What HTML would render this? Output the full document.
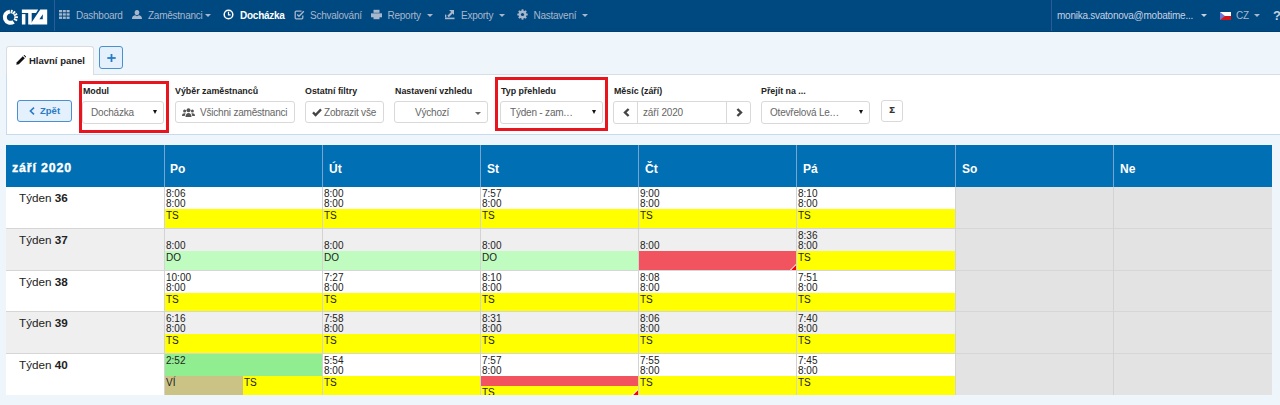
<!DOCTYPE html>
<html><head><meta charset="utf-8">
<style>
*{box-sizing:border-box;margin:0;padding:0}
html,body{width:1280px;height:405px;overflow:hidden}
body{background:#eef5fb;font-family:"Liberation Sans",sans-serif;position:relative;color:#222}
.a{position:absolute}
#nav{left:0;top:0;width:1280px;height:32px;background:#004880;border-bottom:1px solid #003f73}
.ni{position:absolute;top:0;height:31px;line-height:32px;font-size:10px;letter-spacing:-0.25px;color:#a9b7cc;white-space:nowrap}
.sep{position:absolute;top:0;width:1px;height:31px;background:#2a5c9c}
.caret{position:absolute;top:14px;width:0;height:0;border-left:3px solid transparent;border-right:3px solid transparent;border-top:3px solid #a9b7cc}
/* panel */
#tab{left:6px;top:46px;width:88px;height:29px;background:#fff;border:1px solid #d9dde2;border-bottom:none;border-radius:3px 3px 0 0}
#panel{left:6px;top:74px;width:1274px;height:61px;background:#fff;border:1px solid #c6daf0;border-top-color:#d6dee8;border-right:none}
.lbl{position:absolute;top:86px;font-size:8.85px;font-weight:bold;color:#222;white-space:nowrap}
.box{position:absolute;top:101px;height:22px;border:1px solid #d9d9d9;border-radius:3px;background:#fff;font-size:10px;letter-spacing:-0.2px;color:#666;line-height:21px;white-space:nowrap}
.arr{position:absolute;top:8px;width:0;height:0;border-left:2.5px solid transparent;border-right:2.5px solid transparent;border-top:4px solid #111}
.red{position:absolute;border:3px solid #e8141e}
/* table */
.hd{position:absolute;top:145px;height:42px;background:#006fb3;color:#fff;font-weight:bold;font-size:12px}
.hd span{position:absolute;top:17px;left:6px}
.vb{position:absolute;width:1px;background:#74a6cf}
.row{position:absolute;left:6px;width:1266px}
.cell{position:absolute;top:0;bottom:1px;font-size:10px;line-height:10px;color:#222;overflow:hidden}
.t{position:absolute;left:1px}
.bar{position:absolute;left:0;right:0}
.bar span{position:absolute;left:1px;top:2px}
.y{background:#ffff00}
.g{background:#c0fcc0}
.rd{background:#f2545f}
</style></head><body>

<!-- NAV -->
<div id="nav" class="a"></div>
<svg class="a" style="left:0;top:0" width="54" height="32" viewBox="0 0 54 32">
  <path d="M9.91 11.62 A5.6 5.6 0 1 0 13.61 21.79" fill="none" stroke="#fff" stroke-width="4"/>
  <g stroke="#fff" stroke-width="1.9">
    <line x1="11.21" y1="13.39" x2="11.96" y2="9.86"/>
    <line x1="12.8" y1="14.13" x2="15.02" y2="11.29"/>
    <line x1="13.91" y1="15.49" x2="17.14" y2="13.91"/>
    <line x1="14.3" y1="17.2" x2="17.9" y2="17.2"/>
    <line x1="13.91" y1="18.91" x2="17.14" y2="20.49"/>
  </g>
  <path d="M21.9 9.5 H38.2 L36 13.1 H21.9 Z" fill="#fff"/>
  <rect x="21.9" y="14.1" width="3.5" height="10.4" fill="#fff"/>
  <rect x="28.2" y="12.9" width="3.5" height="11.6" fill="#fff"/>
  <path d="M40.3 9.5 H47.2 V24.5 H30.2 Z M39.4 19.2 L42.8 14.2 V19.2 Z" fill="#fff" fill-rule="evenodd"/>
</svg>
<div class="sep" style="left:54px"></div>
<div class="sep" style="left:1051px"></div>

<!-- grid icon -->
<svg class="a" style="left:59px;top:10px" width="11" height="9" viewBox="0 0 11 9" fill="#a9b7cc">
  <rect x="0" y="0" width="3" height="2.3"/><rect x="3.8" y="0" width="3" height="2.3"/><rect x="7.6" y="0" width="3" height="2.3"/>
  <rect x="0" y="3.3" width="3" height="2.3"/><rect x="3.8" y="3.3" width="3" height="2.3"/><rect x="7.6" y="3.3" width="3" height="2.3"/>
  <rect x="0" y="6.6" width="3" height="2.3"/><rect x="3.8" y="6.6" width="3" height="2.3"/><rect x="7.6" y="6.6" width="3" height="2.3"/>
</svg>
<div class="ni" style="left:76px">Dashboard</div>
<!-- person -->
<svg class="a" style="left:132px;top:10px" width="10" height="9" viewBox="0 0 10 9" fill="#a9b7cc">
  <ellipse cx="5" cy="2.6" rx="2.3" ry="2.6"/><path d="M0 9 C0 6 2 5.4 3.2 5.2 L5 6.2 L6.8 5.2 C8 5.4 10 6 10 9 Z"/>
</svg>
<div class="ni" style="left:148px">Zaměstnanci</div>
<div class="caret" style="left:205px"></div>
<!-- clock -->
<svg class="a" style="left:223px;top:9px" width="11" height="11" viewBox="0 0 11 11">
  <circle cx="5.5" cy="5.5" r="4.3" fill="none" stroke="#fff" stroke-width="1.5"/>
  <path d="M5.5 2.8 V5.8 H7.6" fill="none" stroke="#fff" stroke-width="1.2"/>
</svg>
<div class="ni" style="left:240px;color:#fff;font-weight:bold">Docházka</div>
<!-- checkbox -->
<svg class="a" style="left:294px;top:9px" width="11" height="11" viewBox="0 0 11 11">
  <path d="M7.5 2.2 H2.2 A1 1 0 0 0 1.2 3.2 V8.8 A1 1 0 0 0 2.2 9.8 H7.8 A1 1 0 0 0 8.8 8.8 V6.5" fill="none" stroke="#a9b7cc" stroke-width="1.3"/>
  <path d="M3.2 5.4 L5 7.2 L9.8 2.2" fill="none" stroke="#a9b7cc" stroke-width="1.4"/>
</svg>
<div class="ni" style="left:310px">Schvalování</div>
<!-- printer -->
<svg class="a" style="left:371px;top:9px" width="11" height="11" viewBox="0 0 11 11" fill="#a9b7cc">
  <rect x="2.5" y="0.8" width="6" height="3"/><rect x="0" y="4.3" width="11" height="4"/><rect x="2.5" y="7.5" width="6" height="2.7"/>
</svg>
<div class="ni" style="left:387.5px">Reporty</div>
<div class="caret" style="left:426.5px"></div>
<!-- export -->
<svg class="a" style="left:445px;top:9px" width="10" height="11" viewBox="0 0 10 11" fill="#a9b7cc">
  <rect x="0" y="8.6" width="9.5" height="1.6"/><path d="M4 1 H9 V6 L7.6 4.6 L3.8 8.3 L2.3 6.8 L6.1 3.1 L4.6 1.6 Z"/><rect x="0" y="5.6" width="1.3" height="3"/>
</svg>
<div class="ni" style="left:461px">Exporty</div>
<div class="caret" style="left:499px"></div>
<!-- gear -->
<svg class="a" style="left:517px;top:9px" width="11" height="11" viewBox="0 0 11 11">
  <circle cx="5.5" cy="5.5" r="3" fill="none" stroke="#a9b7cc" stroke-width="2"/>
  <g stroke="#a9b7cc" stroke-width="1.8"><line x1="5.5" y1="0.3" x2="5.5" y2="10.7"/><line x1="0.3" y1="5.5" x2="10.7" y2="5.5"/><line x1="1.8" y1="1.8" x2="9.2" y2="9.2"/><line x1="9.2" y1="1.8" x2="1.8" y2="9.2"/></g>
  <circle cx="5.5" cy="5.5" r="1.6" fill="#004880"/>
</svg>
<div class="ni" style="left:533.5px">Nastavení</div>
<div class="caret" style="left:582px"></div>

<div class="ni" style="left:1057px;color:#c5d1e2">monika.svatonova@mobatime...</div>
<div class="caret" style="left:1201px;border-top-color:#c5d1e2"></div>
<svg class="a" style="left:1220px;top:12px" width="11" height="8" viewBox="0 0 11 8">
  <rect width="11" height="4" fill="#fff"/><rect y="4" width="11" height="4" fill="#d7141a"/><path d="M0 0 L5 4 L0 8Z" fill="#6a78d8"/>
</svg>
<div class="ni" style="left:1236px">CZ</div>
<div class="caret" style="left:1254px"></div>
<div class="ni" style="left:1273px;color:#c5d1e2;font-weight:bold;font-size:13px">?</div>

<!-- TAB + PANEL -->
<div id="panel" class="a"></div>
<div id="tab" class="a"></div>
<svg class="a" style="left:16px;top:55px" width="10" height="10" viewBox="0 0 10 10">
  <path d="M0.3 9.7 L0.8 7.2 L6.8 1.2 L8.8 3.2 L2.8 9.2 Z" fill="#111"/><path d="M7.6 0.4 L8.2 -0.2 L10.2 1.8 L9.6 2.4 Z" fill="#111"/>
</svg>
<div class="a" style="left:29px;top:55px;font-size:9.5px;font-weight:bold;color:#222">Hlavní panel</div>
<div class="a" style="left:99px;top:46px;width:24px;height:23px;border:1px solid #4a8fd0;border-radius:3px;background:#e4f0fb"></div>
<svg class="a" style="left:107px;top:54px" width="9" height="8" viewBox="0 0 9 8"><rect x="3.6" y="0" width="1.8" height="8" fill="#2a7bc4"/><rect x="0.3" y="3.1" width="8.4" height="1.8" fill="#2a7bc4"/></svg>

<div class="a" style="left:17px;top:100px;width:55px;height:22px;border:1px solid #4a8fd0;border-radius:3px;background:#e4f0fb"></div>
<svg class="a" style="left:29px;top:107px" width="6" height="8" viewBox="0 0 6 8"><path d="M5 0.6 L1.4 4 L5 7.4" fill="none" stroke="#2a7bc4" stroke-width="1.6"/></svg>
<div class="a" style="left:40px;top:105px;font-size:9.5px;font-weight:bold;color:#2a7bc4">Zpět</div>

<div class="lbl" style="left:83px">Modul</div>
<div class="box" style="left:82px;width:82px;height:23px"><span style="position:absolute;left:8px">Docházka</span><div class="arr" style="left:70px"></div></div>
<div class="red" style="left:79px;top:81px;width:90px;height:52px"></div>

<div class="lbl" style="left:175px">Výběr zaměstnanců</div>
<div class="box" style="left:175px;width:120px">
  <svg class="a" style="left:6px;top:6px" width="13" height="9" viewBox="0 0 13 9" fill="#555"><circle cx="6.5" cy="2.2" r="2"/><circle cx="2.6" cy="3" r="1.5"/><circle cx="10.4" cy="3" r="1.5"/><path d="M3.5 9 C3.5 6 5 5 6.5 5 C8 5 9.5 6 9.5 9Z"/><path d="M0 8 C0 6 1 5.3 2.6 5.3 C3.4 5.3 3.6 5.5 3.6 5.5 C3 6.3 2.8 7 2.8 8Z"/><path d="M13 8 C13 6 12 5.3 10.4 5.3 C9.6 5.3 9.4 5.5 9.4 5.5 C10 6.3 10.2 7 10.2 8Z"/></svg>
  <span style="position:absolute;left:24px">Všichni zaměstnanci</span></div>

<div class="lbl" style="left:305px">Ostatní filtry</div>
<div class="box" style="left:305px;width:79px">
  <svg class="a" style="left:6px;top:6px" width="10" height="9" viewBox="0 0 10 9"><path d="M1 4.4 L3.6 7 L9 1.4" fill="none" stroke="#444" stroke-width="2.3"/></svg>
  <span style="position:absolute;left:18px">Zobrazit vše</span></div>

<div class="lbl" style="left:395px">Nastavení vzhledu</div>
<div class="box" style="left:394px;width:94px"><span style="position:absolute;left:20px">Výchozí</span><div class="arr" style="left:80px;top:10px;border-top-color:#666;border-top-width:3px;border-left-width:3px;border-right-width:3px"></div></div>

<div class="lbl" style="left:501px">Typ přehledu</div>
<div class="box" style="left:500px;width:103px;height:23px"><span style="position:absolute;left:9px">Týden - zam<span style="letter-spacing:0.35px">...</span></span><div class="arr" style="left:91px"></div></div>
<div class="red" style="left:495px;top:77px;width:113px;height:54px;border-width:3.5px"></div>

<div class="lbl" style="left:614px">Měsíc (září)</div>
<div class="box" style="left:613px;width:25px;height:23px;border-radius:3px 0 0 3px">
  <svg class="a" style="left:9px;top:6px" width="7" height="9" viewBox="0 0 7 9"><path d="M5.6 1 L2 4.5 L5.6 8" fill="none" stroke="#444" stroke-width="2.4"/></svg></div>
<div class="box" style="left:637px;width:90px;height:23px;border-radius:0"><span style="position:absolute;left:5px">září 2020</span></div>
<div class="box" style="left:726px;width:25px;height:23px;border-radius:0 3px 3px 0">
  <svg class="a" style="left:9px;top:6px" width="7" height="9" viewBox="0 0 7 9"><path d="M1.4 1 L5 4.5 L1.4 8" fill="none" stroke="#444" stroke-width="2.4"/></svg></div>

<div class="lbl" style="left:761px">Přejít na ...</div>
<div class="box" style="left:761px;width:109px;height:23px"><span style="position:absolute;left:8px">Otevřelová Le<span style="letter-spacing:0.35px">...</span></span><div class="arr" style="left:97px"></div></div>
<div class="box" style="left:881px;top:100px;width:22px;line-height:18px;color:#333;font-weight:bold;font-size:9.5px;text-align:center;-webkit-text-stroke:0.2px #222">Σ</div>

<!-- TABLE -->
<div class="hd" style="left:6px;width:1266px"></div>
<div class="hd" style="left:6px;width:158px;background:none"><span style="font-size:12.4px;letter-spacing:0.85px;top:16px;-webkit-text-stroke:0.35px #fff">září 2020</span></div>
<div class="hd" style="left:164px;width:158px;background:none"><span>Po</span></div>
<div class="hd" style="left:322px;width:158px;background:none"><span style="left:7px">Út</span></div>
<div class="hd" style="left:480px;width:158px;background:none"><span style="left:7px">St</span></div>
<div class="hd" style="left:638px;width:158px;background:none"><span style="left:7px">Čt</span></div>
<div class="hd" style="left:796px;width:158px;background:none"><span style="left:7px">Pá</span></div>
<div class="hd" style="left:955px;width:158px;background:none"><span style="left:7px">So</span></div>
<div class="hd" style="left:1113px;width:159px;background:none"><span style="left:7px">Ne</span></div>



<div id="rows">
<div class="a" style="left:6px;top:187px;width:1266px;height:42px;background:#fff;border-bottom:1px solid #d6d6d6"></div>
<div class="a" style="left:19px;top:191px;font-size:11.7px;color:#222">Týden <b>36</b></div>
<div class="cell" style="left:165px;top:187px;width:157px;height:41px"><div class="t" style="top:2px">8:06</div><div class="t" style="top:12px">8:00</div><div class="bar y" style="top:22px;height:19px"><span>TS</span></div></div>
<div class="cell" style="left:323px;top:187px;width:157px;height:41px"><div class="t" style="top:2px">8:00</div><div class="t" style="top:12px">8:00</div><div class="bar y" style="top:22px;height:19px"><span>TS</span></div></div>
<div class="cell" style="left:481px;top:187px;width:157px;height:41px"><div class="t" style="top:2px">7:57</div><div class="t" style="top:12px">8:00</div><div class="bar y" style="top:22px;height:19px"><span>TS</span></div></div>
<div class="cell" style="left:639px;top:187px;width:157px;height:41px"><div class="t" style="top:2px">9:00</div><div class="t" style="top:12px">8:00</div><div class="bar y" style="top:22px;height:19px"><span>TS</span></div></div>
<div class="cell" style="left:797px;top:187px;width:158px;height:41px"><div class="t" style="top:2px">8:10</div><div class="t" style="top:12px">8:00</div><div class="bar y" style="top:22px;height:19px"><span>TS</span></div></div>
<div class="a" style="left:956px;top:187px;width:157px;height:41px;background:#e3e3e3"></div>
<div class="a" style="left:1114px;top:187px;width:158px;height:41px;background:#e3e3e3"></div>
<div class="a" style="left:6px;top:229px;width:1266px;height:42px;background:#efefef;border-bottom:1px solid #d6d6d6"></div>
<div class="a" style="left:19px;top:233px;font-size:11.7px;color:#222">Týden <b>37</b></div>
<div class="cell" style="left:165px;top:229px;width:157px;height:41px"><div class="t" style="top:12px">8:00</div><div class="bar g" style="top:22px;height:19px"><span>DO</span></div></div>
<div class="cell" style="left:323px;top:229px;width:157px;height:41px"><div class="t" style="top:12px">8:00</div><div class="bar g" style="top:22px;height:19px"><span>DO</span></div></div>
<div class="cell" style="left:481px;top:229px;width:157px;height:41px"><div class="t" style="top:12px">8:00</div><div class="bar g" style="top:22px;height:19px"><span>DO</span></div></div>
<div class="cell" style="left:639px;top:229px;width:157px;height:41px"><div class="t" style="top:12px">8:00</div><div class="bar rd" style="top:22px;height:19px"><svg class="a" style="right:0;bottom:0" width="7" height="7" viewBox="0 0 7 7"><path d="M7 1 L7 7 L1 7 Z" fill="#fff"/><path d="M7 2.2 L7 7 L2.2 7 Z" fill="#f00"/></svg></div></div>
<div class="cell" style="left:797px;top:229px;width:158px;height:41px"><div class="t" style="top:2px">8:36</div><div class="t" style="top:12px">8:00</div><div class="bar y" style="top:22px;height:19px"><span>TS</span></div></div>
<div class="a" style="left:956px;top:229px;width:157px;height:41px;background:#e3e3e3"></div>
<div class="a" style="left:1114px;top:229px;width:158px;height:41px;background:#e3e3e3"></div>
<div class="a" style="left:6px;top:271px;width:1266px;height:41px;background:#fff;border-bottom:1px solid #d6d6d6"></div>
<div class="a" style="left:19px;top:275px;font-size:11.7px;color:#222">Týden <b>38</b></div>
<div class="cell" style="left:165px;top:271px;width:157px;height:40px"><div class="t" style="top:2px">10:00</div><div class="t" style="top:12px">8:00</div><div class="bar y" style="top:22px;height:18px"><span>TS</span></div></div>
<div class="cell" style="left:323px;top:271px;width:157px;height:40px"><div class="t" style="top:2px">7:27</div><div class="t" style="top:12px">8:00</div><div class="bar y" style="top:22px;height:18px"><span>TS</span></div></div>
<div class="cell" style="left:481px;top:271px;width:157px;height:40px"><div class="t" style="top:2px">8:10</div><div class="t" style="top:12px">8:00</div><div class="bar y" style="top:22px;height:18px"><span>TS</span></div></div>
<div class="cell" style="left:639px;top:271px;width:157px;height:40px"><div class="t" style="top:2px">8:08</div><div class="t" style="top:12px">8:00</div><div class="bar y" style="top:22px;height:18px"><span>TS</span></div></div>
<div class="cell" style="left:797px;top:271px;width:158px;height:40px"><div class="t" style="top:2px">7:51</div><div class="t" style="top:12px">8:00</div><div class="bar y" style="top:22px;height:18px"><span>TS</span></div></div>
<div class="a" style="left:956px;top:271px;width:157px;height:40px;background:#e3e3e3"></div>
<div class="a" style="left:1114px;top:271px;width:158px;height:40px;background:#e3e3e3"></div>
<div class="a" style="left:6px;top:312px;width:1266px;height:42px;background:#efefef;border-bottom:1px solid #d6d6d6"></div>
<div class="a" style="left:19px;top:316px;font-size:11.7px;color:#222">Týden <b>39</b></div>
<div class="cell" style="left:165px;top:312px;width:157px;height:41px"><div class="t" style="top:2px">6:16</div><div class="t" style="top:12px">8:00</div><div class="bar y" style="top:22px;height:19px"><span>TS</span></div></div>
<div class="cell" style="left:323px;top:312px;width:157px;height:41px"><div class="t" style="top:2px">7:58</div><div class="t" style="top:12px">8:00</div><div class="bar y" style="top:22px;height:19px"><span>TS</span></div></div>
<div class="cell" style="left:481px;top:312px;width:157px;height:41px"><div class="t" style="top:2px">8:31</div><div class="t" style="top:12px">8:00</div><div class="bar y" style="top:22px;height:19px"><span>TS</span></div></div>
<div class="cell" style="left:639px;top:312px;width:157px;height:41px"><div class="t" style="top:2px">8:06</div><div class="t" style="top:12px">8:00</div><div class="bar y" style="top:22px;height:19px"><span>TS</span></div></div>
<div class="cell" style="left:797px;top:312px;width:158px;height:41px"><div class="t" style="top:2px">7:40</div><div class="t" style="top:12px">8:00</div><div class="bar y" style="top:22px;height:19px"><span>TS</span></div></div>
<div class="a" style="left:956px;top:312px;width:157px;height:41px;background:#e3e3e3"></div>
<div class="a" style="left:1114px;top:312px;width:158px;height:41px;background:#e3e3e3"></div>
<div class="a" style="left:6px;top:354px;width:1266px;height:41px;background:#fff;"></div>
<div class="a" style="left:19px;top:358px;font-size:11.7px;color:#222">Týden <b>40</b></div>
<div class="cell" style="left:165px;top:354px;width:157px;height:41px"><div class="bar" style="top:0;height:22px;background:#90ee90"><span style="top:2px">2:52</span></div><div class="bar y" style="top:22px;height:19px"><span style="left:79px">TS</span></div><div class="bar" style="top:22px;height:19px;width:78px;background:#cbc385"><span>VÍ</span></div></div>
<div class="cell" style="left:323px;top:354px;width:157px;height:41px"><div class="t" style="top:2px">5:54</div><div class="t" style="top:12px">8:00</div><div class="bar y" style="top:22px;height:19px"><span>TS</span></div></div>
<div class="cell" style="left:481px;top:354px;width:157px;height:41px"><div class="t" style="top:2px">7:57</div><div class="t" style="top:12px">8:00</div><div class="bar rd" style="top:22px;height:10px"></div><div class="bar y" style="top:32px;height:9px"><span style="top:2px">TS</span><svg class="a" style="right:0;bottom:0" width="7" height="7" viewBox="0 0 7 7"><path d="M7 1 L7 7 L1 7 Z" fill="#fff"/><path d="M7 2.2 L7 7 L2.2 7 Z" fill="#f00"/></svg></div></div>
<div class="cell" style="left:639px;top:354px;width:157px;height:41px"><div class="t" style="top:2px">7:55</div><div class="t" style="top:12px">8:00</div><div class="bar y" style="top:22px;height:19px"><span>TS</span></div></div>
<div class="cell" style="left:797px;top:354px;width:158px;height:41px"><div class="t" style="top:2px">7:45</div><div class="t" style="top:12px">8:00</div><div class="bar y" style="top:22px;height:19px"><span>TS</span></div></div>
<div class="a" style="left:956px;top:354px;width:157px;height:41px;background:#e3e3e3"></div>
<div class="a" style="left:1114px;top:354px;width:158px;height:41px;background:#e3e3e3"></div>
<div class="a" style="left:164px;top:187px;width:1px;height:208px;background:#d3d3d3"></div>
<div class="a" style="left:322px;top:187px;width:1px;height:208px;background:#d3d3d3"></div>
<div class="a" style="left:480px;top:187px;width:1px;height:208px;background:#d3d3d3"></div>
<div class="a" style="left:638px;top:187px;width:1px;height:208px;background:#d3d3d3"></div>
<div class="a" style="left:796px;top:187px;width:1px;height:208px;background:#d3d3d3"></div>
<div class="a" style="left:955px;top:187px;width:1px;height:208px;background:#d3d3d3"></div>
<div class="a" style="left:1113px;top:187px;width:1px;height:208px;background:#d3d3d3"></div>
<div class="vb" style="left:164px;top:145px;height:42px"></div>
<div class="vb" style="left:322px;top:145px;height:42px"></div>
<div class="vb" style="left:480px;top:145px;height:42px"></div>
<div class="vb" style="left:638px;top:145px;height:42px"></div>
<div class="vb" style="left:796px;top:145px;height:42px"></div>
<div class="vb" style="left:955px;top:145px;height:42px"></div>
<div class="vb" style="left:1113px;top:145px;height:42px"></div>
</div><!--rows-->
</body></html>
